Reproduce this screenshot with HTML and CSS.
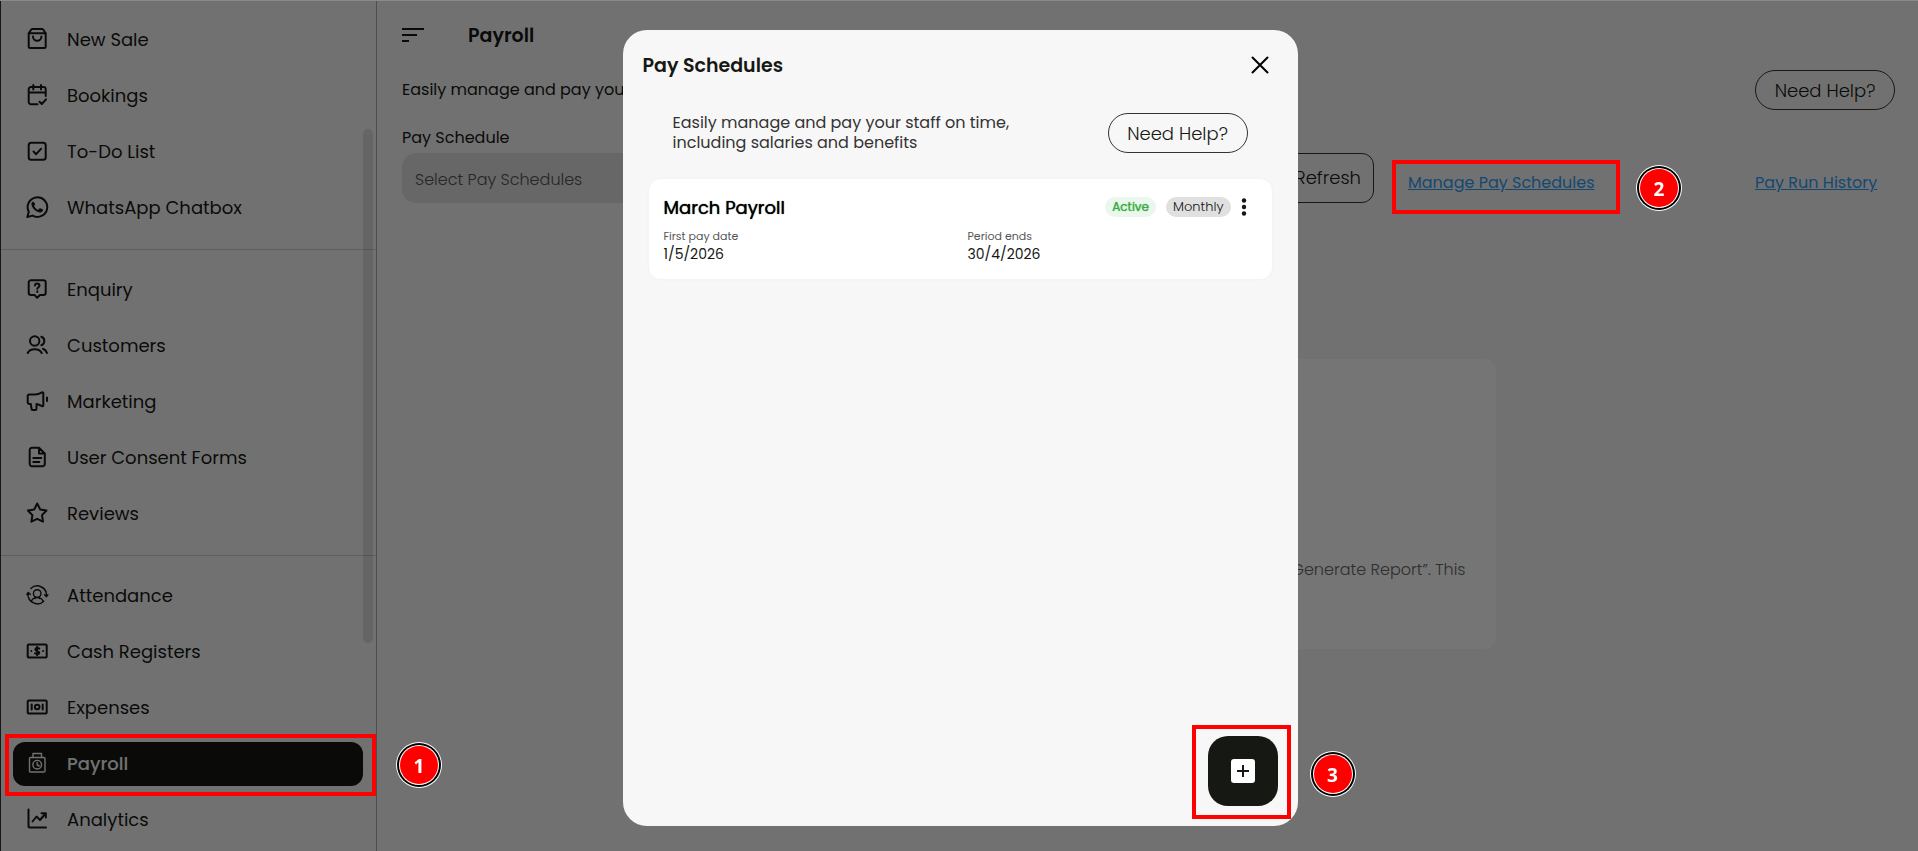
FILE: index.html
```html
<!DOCTYPE html>
<html lang="en">
<head>
    <meta charset="UTF-8">
    <meta name="viewport" content="width=device-width, initial-scale=1.0">
    <title>Payroll</title>
    <link rel="stylesheet" href="styles.css">
</head>
<body>
    <div class="page">
        <nav class="sidebar">
            <ul class="menu">
                <li><a href="#" class="menu-item">
                    <svg class="icon" viewBox="0 0 24 24"><path d="M3.7 6v13.500a1.500 1.500 0 0 0 1.500 1.500h14a1.500 1.500 0 0 0 1.500-1.500V6M3.700 6.200l2.600-3.700q.4-.5 1-.5h9.800q.6 0 1 .5l2.600 3.700zM8 9.500a4.200 4.200 0 0 0 8.400 0"/></svg>
                    New Sale</a></li>
                <li><a href="#" class="menu-item">
                    <svg class="icon" viewBox="0 0 24 24"><path d="M12.500 21.300H6a2.300 2.300 0 0 1-2.300-2.300V6.300A2.300 2.300 0 0 1 6 4h12.400a2.300 2.300 0 0 1 2.300 2.300V13M3.700 9.500h17M8.300 2v4.500M16 2v4.500M14.500 18.700l2.300 2.300 4.200-4.700"/></svg>
                    Bookings</a></li>
                <li><a href="#" class="menu-item">
                    <svg class="icon" viewBox="0 0 24 24"><rect x="3.700" y="3.700" width="17" height="17" rx="2.500"/><path d="M8.500 12.500l2.700 2.700 5-5.500"/></svg>
                    To-Do List</a></li>
                <li><a href="#" class="menu-item">
                    <svg class="icon" viewBox="0 0 24 24"><path d="M2.300 22l1.500-5.300a9.800 9.800 0 1 1 3.800 3.900z"/><path class="solid" d="M9 7.200c-.3-.6-.6-.5-1-.5-.5 0-1.600.7-1.600 2.300 0 3.700 4.700 8.400 8.700 8.400 1.500 0 2.900-.9 2.900-2.300 0-.4 0-.6-.5-.8l-2.200-1c-.4-.2-.7-.1-.9.200l-.9 1.100c-.2.3-.4.300-.8.100-1.500-.7-2.700-1.900-3.500-3.400-.2-.4 0-.6.2-.8l.6-.8c.2-.2.1-.5 0-.8z"/></svg>
                    WhatsApp Chatbox</a></li>
            </ul>
            <ul class="menu">
                <li><a href="#" class="menu-item">
                    <svg class="icon" viewBox="0 0 24 24"><path d="M6 3.300h12.400a2.300 2.300 0 0 1 2.300 2.300v10.100a2.300 2.300 0 0 1-2.300 2.300h-3.500l-2.700 2.700L9.500 18H6a2.300 2.300 0 0 1-2.300-2.300V5.600A2.300 2.300 0 0 1 6 3.300zM10 8.500c.1-2.700 4.600-2.500 4.500.1-.1 1.600-2.200 1.600-2.200 3.200M12.300 14.200v.8"/></svg>
                    Enquiry</a></li>
                <li><a href="#" class="menu-item">
                    <svg class="icon" viewBox="0 0 24 24"><circle cx="9.700" cy="8" r="4.700"/><path d="M2.700 20c2.500-5 11.500-5 14 0M16.300 3.800c4 1.200 4 7.200 0 8.400M18 15.800c1.800.7 3.200 2 4 4.200"/></svg>
                    Customers</a></li>
                <li><a href="#" class="menu-item">
                    <svg class="icon" viewBox="0 0 24 24"><path d="M4.500 5.500H10c2.500 0 4.500-.7 7-2.200.6-.3 1.300 0 1.300.7v12.500c0 .7-.7 1-1.300.7-2-1.200-3.700-2-5.500-2.200v4.800c0 .7-.5 1.300-1.300 1.300H8c-.7 0-1.300-.4-1.400-1.100L5.800 15H4.500a1.800 1.800 0 0 1-1.800-1.800V7.300a1.800 1.800 0 0 1 1.800-1.800zM22 8.500v3.500"/></svg>
                    Marketing</a></li>
                <li><a href="#" class="menu-item">
                    <svg class="icon" viewBox="0 0 24 24"><path d="M14 2.700H7a2.300 2.300 0 0 0-2.300 2.300v14a2.300 2.300 0 0 0 2.300 2.300h10.500a2.300 2.300 0 0 0 2.300-2.300V8.500zM14 2.700v5.800h5.800M8.300 13h8M8.300 17h6"/></svg>
                    User Consent Forms</a></li>
                <li><a href="#" class="menu-item">
                    <svg class="icon" viewBox="0 0 24 24"><path d="M12.200 2.500l3 6 6.300 1-4.500 4.600 1 6.600-5.800-2.900-5.800 2.900 1-6.600L2.900 9.500l6.300-1z"/></svg>
                    Reviews</a></li>
            </ul>
            <ul class="menu">
                <li><a href="#" class="menu-item">
                    <svg class="icon thin" viewBox="0 0 24 24"><circle cx="12.200" cy="10.500" r="3.800"/><path d="M5.800 5.500a9.300 9.300 0 0 1 15.700 7M1.800 11.500l1.500-2 2 2M23 11.700l-1.500 2-2-2M3.200 10a9.300 9.300 0 0 0 15.600 8.200M6.500 18c1.500-4.500 9.900-4.500 11.400 0M10 14v1.500M14.400 14v1.500"/></svg>
                    Attendance</a></li>
                <li><a href="#" class="menu-item">
                    <svg class="icon" viewBox="0 0 24 24"><rect x="2.700" y="5.500" width="19" height="13" rx="1"/><path d="M14.300 9.600c-1-.9-4-.9-4 .9 0 2 4 1.200 4 3.200 0 1.700-3 1.700-4.200.6M12.200 7.800v8.400M6.300 12v.1M18.100 12v.1"/></svg>
                    Cash Registers</a></li>
                <li><a href="#" class="menu-item">
                    <svg class="icon" viewBox="0 0 24 24"><rect x="2.700" y="5.500" width="19" height="13" rx="1"/><circle cx="12.200" cy="12" r="2.300"/><path d="M6.700 9.500v5M17.700 9.500v5"/></svg>
                    Expenses</a></li>
                <li class="marked"><a href="#" class="menu-item active">
                    <svg class="icon thin" viewBox="0 0 24 24"><rect x="4.500" y="6.500" width="15.500" height="14.500" rx="1"/><path d="M8 6.500V2.500h8.500v4M12.200 11.500V14l2 1"/><circle cx="12.200" cy="13.700" r="4.300"/></svg>
                    Payroll</a>
                    <span class="frame frame-menu"></span>
                    <span class="step step-menu">1</span></li>
                <li><a href="#" class="menu-item">
                    <svg class="icon" viewBox="0 0 24 24"><path d="M3.500 2.500V19a1.500 1.500 0 0 0 1.500 1.500h16M7.500 14.500l4-5 3.500 3.500 5.500-6.500M16.500 6.200h4.300v4.300"/></svg>
                    Analytics</a></li>
            </ul>
            <div class="scroll-thumb"></div>
        </nav>

        <main class="content">
            <header class="topbar">
                <button class="menu-toggle" aria-label="Toggle menu">
                    <svg viewBox="0 0 24 16"><path d="M0 2h22M0 8h15M0 14h7"/></svg>
                </button>
                <h1>Payroll</h1>
            </header>
            <div class="intro">
                <p>Easily manage and pay your staff on time, including salaries and benefits</p>
                <button class="help">Need Help?</button>
            </div>
            <label class="field-label" for="schedule">Pay Schedule</label>
            <div class="toolbar">
                <select id="schedule" class="schedule">
                    <option>Select Pay Schedules</option>
                </select>
                <button class="refresh">Refresh</button>
                <div class="manage">
                    <a href="#">Manage Pay Schedules</a>
                    <span class="frame frame-manage"></span>
                    <span class="step step-manage">2</span>
                </div>
                <a href="#" class="history">Pay Run History</a>
            </div>
            <section class="empty">
                <p>“Generate Report”. This</p>
            </section>
        </main>
    </div>

    <div class="overlay">
        <div class="dialog" role="dialog" aria-labelledby="dialogTitle">
            <div class="dialog-head">
                <h2 id="dialogTitle">Pay Schedules</h2>
                <button class="close" aria-label="Close">
                    <svg viewBox="0 0 18 18"><path d="M1.500 1.500l15 15M16.500 1.500l-15 15"/></svg>
                </button>
            </div>
            <div class="dialog-intro">
                <p>Easily manage and pay your staff on time, including salaries and benefits</p>
                <button class="help">Need Help?</button>
            </div>
            <article class="card">
                <div class="card-head">
                    <h3>March Payroll</h3>
                    <span class="tag tag-active">Active</span>
                    <span class="tag tag-period">Monthly</span>
                    <button class="more" aria-label="More options">
                        <svg viewBox="0 0 6 18"><circle cx="3" cy="2.500" r="2.200"/><circle cx="3" cy="9" r="2.200"/><circle cx="3" cy="15.500" r="2.200"/></svg>
                    </button>
                </div>
                <dl class="dates">
                    <div>
                        <dt>First pay date</dt>
                        <dd>1/5/2026</dd>
                    </div>
                    <div>
                        <dt>Period ends</dt>
                        <dd>30/4/2026</dd>
                    </div>
                </dl>
            </article>
            <div class="add-wrap">
                <button class="add" aria-label="Add pay schedule">
                    <svg viewBox="0 0 24 24"><rect width="24" height="24" rx="3"/><path d="M12 6v12M6 12h12"/></svg>
                </button>
                <span class="frame frame-add"></span>
                <span class="step step-add">3</span>
            </div>
        </div>
    </div>
</body>
</html>
```
FILE: styles.css
```css
* {
    box-sizing: border-box;
}
body {
    margin: 0;
    height: 100vh;
    overflow: hidden;
    font-family: Poppins, Inter, sans-serif;
    font-size: 16px;
    color: #161814;
    background-color: #f7f7f7;
}
h1, h2, h3, p, ul, dl, dd {
    margin: 0;
    padding: 0;
}
button {
    font-family: inherit;
    color: inherit;
    background: none;
    border: none;
    padding: 0;
    cursor: pointer;
}
svg {
    display: block;
    fill: none;
    stroke: currentColor;
    stroke-width: 2;
    stroke-linecap: round;
    stroke-linejoin: round;
}
.page {
    display: flex;
    height: 100vh;
    border-left: 1px solid #333;
}

/* Sidebar */
.sidebar {
    position: relative;
    flex: 0 0 376px;
    padding-top: 18px;
    border-right: 1px solid #aaa;
}
.menu {
    list-style: none;
    display: flex;
    flex-direction: column;
    gap: 12px;
    padding: 0 13px 0 12px;
}
.menu + .menu {
    margin-top: 19px;
    padding-top: 18px;
    border-top: 1px solid #ccc;
}
.menu-item {
    display: flex;
    align-items: center;
    gap: 18px;
    height: 44px;
    padding: 0 12px 2px;
    border-radius: 12px;
    font-size: 18px;
    color: inherit;
    text-decoration: none;
}
.menu-item.active {
    background-color: #161814;
    color: #f7f7f7;
    font-weight: 500;
}
.icon {
    width: 24px;
    height: 24px;
}
.icon.thin {
    stroke-width: 1.4;
}
.icon .solid {
    fill: currentColor;
    stroke: none;
}
.scroll-thumb {
    position: absolute;
    top: 129px;
    right: 3px;
    width: 10px;
    height: 514px;
    border-radius: 5px;
    background-color: rgba(0, 0, 0, 0.1);
}

/* Main content */
.content {
    flex: 1;
    min-width: 0;
    padding: 20px 23px 0 25px;
}
.topbar {
    display: flex;
    align-items: center;
    gap: 42px;
    height: 30px;
}
.menu-toggle svg {
    width: 24px;
    height: 16px;
    stroke-linecap: butt;
}
h1, h2 {
    font-size: 19px;
    font-weight: 600;
}
.intro {
    display: flex;
    justify-content: space-between;
    height: 70px;
    padding-top: 20px;
}
.intro p {
    line-height: 40px;
}
.help {
    width: 140px;
    height: 40px;
    border: 1px solid #333;
    border-radius: 20px;
    font-size: 18px;
    font-weight: 300;
}
.field-label {
    display: block;
    height: 33px;
    padding-top: 5px;
    line-height: 26px;
}
.toolbar {
    display: flex;
    height: 50px;
}
.schedule {
    flex: 1;
    appearance: none;
    padding: 2px 13px 0;
    border: none;
    border-radius: 14px;
    background-color: #e0e0e0;
    font-family: inherit;
    font-size: 16px;
    font-weight: 300;
    color: #555;
}
.refresh {
    width: 140px;
    margin-left: 20px;
    padding: 0 12px 2px 0;
    border: 1px solid #333;
    border-radius: 12px;
    font-size: 18px;
    font-weight: 300;
    text-align: right;
}
.manage {
    position: relative;
    width: 228px;
    height: 54px;
    margin: 7px 135px 0 18px;
    padding-left: 16px;
    line-height: 46px;
}
.manage a, .history {
    color: #2f9df5;
}
.history {
    width: 140px;
    margin-top: 7px;
    line-height: 46px;
}
.empty {
    width: 694px;
    height: 290px;
    margin: 156px auto 0;
    padding: 198px 30px 0;
    border-radius: 12px;
    background-color: #fff;
    color: #666;
    font-weight: 300;
    text-align: right;
}

/* Dialog */
.overlay {
    position: fixed;
    inset: 0;
    z-index: 1;
    display: flex;
    justify-content: center;
    padding: 30px 0 25px 2px;
    background-color: rgba(0, 0, 0, 0.54);
    box-shadow: inset 0 1px #8a8a8a;
}
.dialog {
    display: flex;
    flex-direction: column;
    width: 675px;
    padding: 20px;
    border-radius: 24px;
    background-color: #f7f7f7;
}
.dialog-head {
    display: flex;
    align-items: center;
    justify-content: space-between;
    height: 30px;
    padding-right: 9px;
}
.close svg {
    width: 18px;
    height: 18px;
    color: #000;
}
.dialog-intro {
    display: flex;
    align-items: center;
    justify-content: space-between;
    margin-top: 33px;
    padding: 0 30px;
}
.dialog-intro p {
    width: 370px;
    line-height: 20px;
    color: #333;
}
.card {
    height: 100px;
    margin: 26px 6px 0;
    padding: 15px;
    border-radius: 12px;
    background-color: #fff;
    box-shadow: 0 0 4px rgba(0, 0, 0, 0.03);
}
.card-head {
    display: flex;
    align-items: center;
    gap: 10px;
    height: 26px;
    padding-right: 10px;
}
.card-head h3 {
    flex: 1;
    font-size: 18px;
    font-weight: 400;
    color: #000;
    text-shadow: 0 0 1px #000;
}
.tag {
    padding: 0 7px;
    border-radius: 10px;
    font-size: 13px;
    line-height: 20px;
}
.tag-active {
    background-color: #ebf7ed;
    color: #3bad47;
    font-size: 12px;
    text-shadow: 0 0 1px #3bad47;
}
.tag-period {
    background-color: #e0e0e0;
    font-weight: 300;
}
.more svg {
    width: 6px;
    height: 18px;
    fill: #161814;
    stroke: none;
}
.dates {
    display: grid;
    grid-template-columns: 304px 1fr;
    margin-top: 8px;
}
.dates dt {
    font-size: 11px;
    line-height: 16px;
    color: #555;
}
.dates dd {
    font-size: 14px;
    line-height: 20px;
}
.add-wrap {
    position: relative;
    margin-top: auto;
    align-self: flex-end;
}
.add {
    display: flex;
    align-items: center;
    justify-content: center;
    width: 70px;
    height: 70px;
    border-radius: 20px;
    background-color: #161814;
}
.add svg {
    width: 24px;
    height: 24px;
    stroke: #161814;
    stroke-linecap: butt;
}
.add rect {
    fill: #fff;
    stroke: none;
}

/* Numbered steps */
.marked {
    position: relative;
}
.frame {
    position: absolute;
    z-index: 2;
    border: 4px solid #f00;
}
.step {
    position: absolute;
    z-index: 2;
    width: 38px;
    height: 38px;
    border-radius: 50%;
    background-color: #f00;
    box-shadow: 0 0 0 1px #fff, 0 0 0 3px #000, 0 0 0 4px #fff;
    color: #fff;
    font: bold 19px/40px "Open Sans", sans-serif;
    text-align: center;
}
.frame-menu {
    inset: -8px -13px -10px -8px;
}
.step-menu {
    top: 4px;
    left: 387px;
}
.frame-manage {
    inset: 0;
}
.step-manage {
    top: 9px;
    left: 248px;
}
.frame-add {
    inset: -11px -13px -13px -16px;
}
.step-add {
    top: 19px;
    left: 106px;
}
```
